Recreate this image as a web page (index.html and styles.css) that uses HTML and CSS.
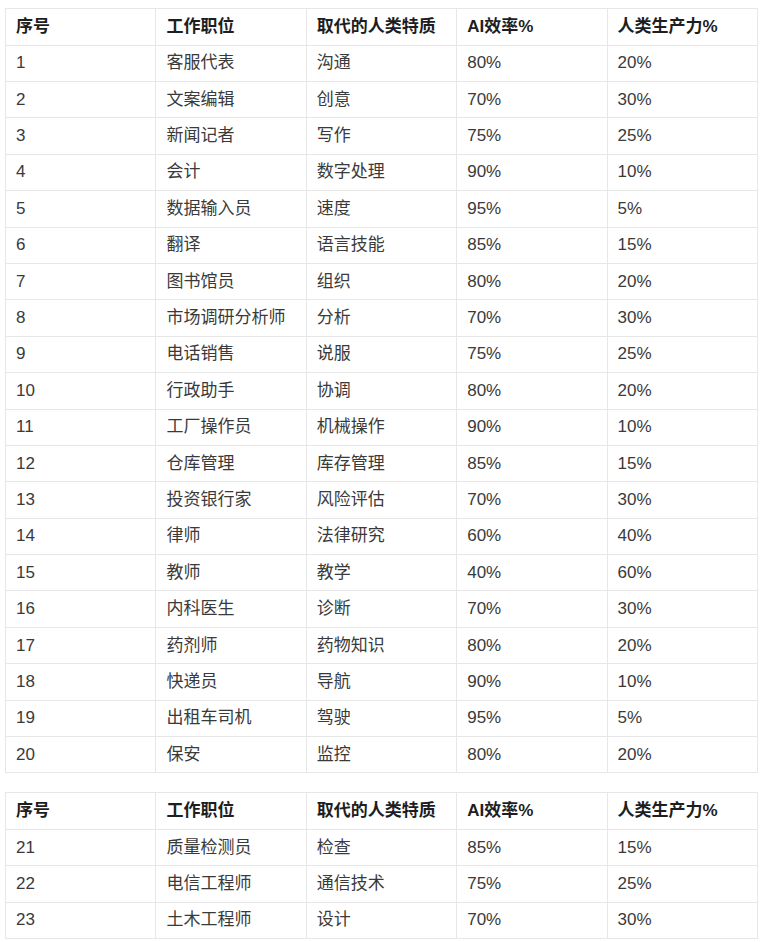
FILE: index.html
```html
<!DOCTYPE html>
<html lang="zh">
<head>
<meta charset="utf-8">
<link rel="stylesheet" href="styles.css">
</head>
<body>
<div class="page">
<table class="grid">
  <thead>
    <tr><th>序号</th><th>工作职位</th><th>取代的人类特质</th><th>AI效率%</th><th>人类生产力%</th></tr>
  </thead>
  <tbody>
    <tr><td>1</td><td>客服代表</td><td>沟通</td><td>80%</td><td>20%</td></tr>
    <tr><td>2</td><td>文案编辑</td><td>创意</td><td>70%</td><td>30%</td></tr>
    <tr><td>3</td><td>新闻记者</td><td>写作</td><td>75%</td><td>25%</td></tr>
    <tr><td>4</td><td>会计</td><td>数字处理</td><td>90%</td><td>10%</td></tr>
    <tr><td>5</td><td>数据输入员</td><td>速度</td><td>95%</td><td>5%</td></tr>
    <tr><td>6</td><td>翻译</td><td>语言技能</td><td>85%</td><td>15%</td></tr>
    <tr><td>7</td><td>图书馆员</td><td>组织</td><td>80%</td><td>20%</td></tr>
    <tr><td>8</td><td>市场调研分析师</td><td>分析</td><td>70%</td><td>30%</td></tr>
    <tr><td>9</td><td>电话销售</td><td>说服</td><td>75%</td><td>25%</td></tr>
    <tr><td>10</td><td>行政助手</td><td>协调</td><td>80%</td><td>20%</td></tr>
    <tr><td>11</td><td>工厂操作员</td><td>机械操作</td><td>90%</td><td>10%</td></tr>
    <tr><td>12</td><td>仓库管理</td><td>库存管理</td><td>85%</td><td>15%</td></tr>
    <tr><td>13</td><td>投资银行家</td><td>风险评估</td><td>70%</td><td>30%</td></tr>
    <tr><td>14</td><td>律师</td><td>法律研究</td><td>60%</td><td>40%</td></tr>
    <tr><td>15</td><td>教师</td><td>教学</td><td>40%</td><td>60%</td></tr>
    <tr><td>16</td><td>内科医生</td><td>诊断</td><td>70%</td><td>30%</td></tr>
    <tr><td>17</td><td>药剂师</td><td>药物知识</td><td>80%</td><td>20%</td></tr>
    <tr><td>18</td><td>快递员</td><td>导航</td><td>90%</td><td>10%</td></tr>
    <tr><td>19</td><td>出租车司机</td><td>驾驶</td><td>95%</td><td>5%</td></tr>
    <tr><td>20</td><td>保安</td><td>监控</td><td>80%</td><td>20%</td></tr>
  </tbody>
</table>
<table class="grid">
  <thead>
    <tr><th>序号</th><th>工作职位</th><th>取代的人类特质</th><th>AI效率%</th><th>人类生产力%</th></tr>
  </thead>
  <tbody>
    <tr><td>21</td><td>质量检测员</td><td>检查</td><td>85%</td><td>15%</td></tr>
    <tr><td>22</td><td>电信工程师</td><td>通信技术</td><td>75%</td><td>25%</td></tr>
    <tr><td>23</td><td>土木工程师</td><td>设计</td><td>70%</td><td>30%</td></tr>
  </tbody>
</table>
</div>
</body>
</html>
```
FILE: styles.css
```css
html, body {
  margin: 0;
  padding: 0;
  background: #ffffff;
}
.page {
  padding: 8px 0 0 5px;
  display: flex;
  flex-direction: column;
  gap: 19px;
  font-family: "Liberation Sans", "Noto Sans CJK SC", sans-serif;
  font-size: 17px;
  color: #3a3a3a;
}
.grid {
  width: 753px;
  border-collapse: collapse;
  table-layout: fixed;
}
.grid th,
.grid td {
  border: 1px solid #e7e7e7;
  text-align: left;
  padding: 0 10px;
  line-height: 20px;
  white-space: nowrap;
}
.grid th {
  height: 35.6px;
  font-weight: bold;
  color: #1e1e1e;
}
.grid td {
  height: 35.4px;
}
```
